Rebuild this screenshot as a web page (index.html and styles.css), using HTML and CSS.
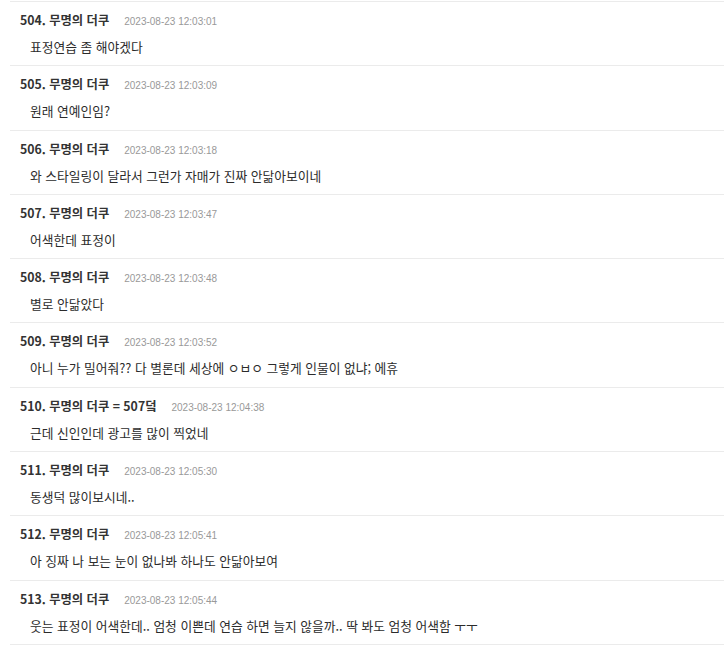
FILE: index.html
```html
<!DOCTYPE html>
<html lang="ko">
<head>
<meta charset="utf-8">
<link rel="stylesheet" href="styles.css">
</head>
<body>
<ul class="list">
  <li class="item"><div class="head"><span class="name">504. 무명의 더쿠</span><span class="date">2023-08-23 12:03:01</span></div><p class="text">표정연습 좀 해야겠다</p></li>
  <li class="item"><div class="head"><span class="name">505. 무명의 더쿠</span><span class="date">2023-08-23 12:03:09</span></div><p class="text">원래 연예인임?</p></li>
  <li class="item"><div class="head"><span class="name">506. 무명의 더쿠</span><span class="date">2023-08-23 12:03:18</span></div><p class="text">와 스타일링이 달라서 그런가 자매가 진짜 안닮아보이네</p></li>
  <li class="item"><div class="head"><span class="name">507. 무명의 더쿠</span><span class="date">2023-08-23 12:03:47</span></div><p class="text">어색한데 표정이</p></li>
  <li class="item"><div class="head"><span class="name">508. 무명의 더쿠</span><span class="date">2023-08-23 12:03:48</span></div><p class="text">별로 안닮았다</p></li>
  <li class="item"><div class="head"><span class="name">509. 무명의 더쿠</span><span class="date">2023-08-23 12:03:52</span></div><p class="text">아니 누가 밀어줘?? 다 별론데 세상에 ㅇㅂㅇ 그렇게 인물이 없냐; 에휴</p></li>
  <li class="item"><div class="head"><span class="name">510. 무명의 더쿠 = 507덬</span><span class="date">2023-08-23 12:04:38</span></div><p class="text">근데 신인인데 광고를 많이 찍었네</p></li>
  <li class="item"><div class="head"><span class="name">511. 무명의 더쿠</span><span class="date">2023-08-23 12:05:30</span></div><p class="text">동생덕 많이보시네..</p></li>
  <li class="item"><div class="head"><span class="name">512. 무명의 더쿠</span><span class="date">2023-08-23 12:05:41</span></div><p class="text">아 징짜 나 보는 눈이 없나봐 하나도 안닮아보여</p></li>
  <li class="item"><div class="head"><span class="name">513. 무명의 더쿠</span><span class="date">2023-08-23 12:05:44</span></div><p class="text">웃는 표정이 어색한데.. 엄청 이쁜데 연습 하면 늘지 않을까.. 딱 봐도 엄청 어색함 ㅜㅜ</p></li>
</ul>
</body>
</html>
```

FILE: styles.css
```css
html, body {
  margin: 0;
  padding: 0;
  background: #fff;
}
body {
  font-family: "Noto Sans CJK KR", "Noto Sans", sans-serif;
  color: #333;
}
.list {
  list-style: none;
  margin: 1px 0 0 10px;
  padding: 0;
  border-top: 1px solid #ebebeb;
}
.item {
  padding: 9px 0 9.3px 10px;
  border-bottom: 1px solid #ebebeb;
}
.head {
  display: flex;
  align-items: baseline;
  gap: 15px;
  height: 18px;
  line-height: 18px;
}
.name {
  font-size: 12.3px;
  font-weight: bold;
  color: #333;
}
.date {
  font-family: "Liberation Sans", Arial, sans-serif;
  font-size: 10px;
  color: #999;
}
.text {
  margin: 9px 0 0 10px;
  font-size: 12.75px;
  line-height: 18px;
  color: #2b2b2b;
}
```
